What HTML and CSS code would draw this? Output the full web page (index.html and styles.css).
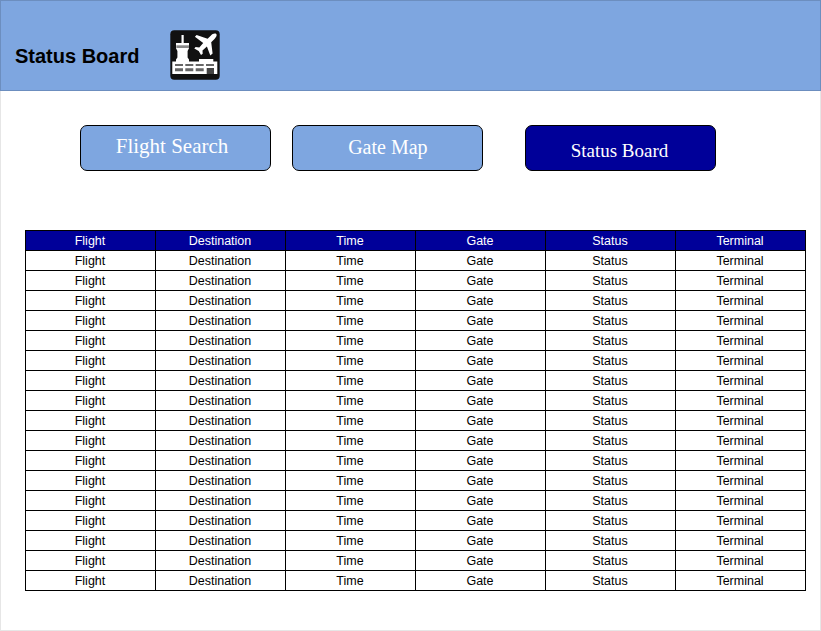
FILE: index.html
```
<!DOCTYPE html>
<html lang="en">
<head>
<meta charset="utf-8">
<title>Status Board</title>
<link rel="stylesheet" href="styles.css">
</head>
<body>
<div class="page">
  <header class="header">
    <h1>Status Board</h1>
    <svg class="logo" viewBox="0 0 50 50" aria-hidden="true">
      <rect x=".3" y=".3" width="49.4" height="49.4" rx="4" fill="#111"/>
      <g fill="#fff">
        <path d="M11.500 5h2.200v8H19v5.200L17.600 21v6.500l1.400 2v2.100h10V29h14.300v2.600h4V44H2.300V31.600H6v-2.100l1.400-2V21L6 18.200V13h5.500z"/>
        <path d="M46.300 4.100C44.800 2.900 42.400 4 40.700 5.700L37.600 8.800 26.600 4.900 24.900 6.800 33.200 12.900 29.300 17.400 25.600 17.100 24.300 18.500 28.700 21 31 25 32.700 23.800 32.500 20.400 36.900 16.400 40.300 25.400 42.600 23.600 41.200 12.300 44.500 9C46.200 7.300 47.300 5.200 46.300 4.100Z"/>
      </g>
      <path d="M6.300 15.300H19V18H6.300z" fill="#888"/>
      <path d="M5 34h8v2H5zM15.300 34h8v2h-8zM25.700 34h8v2h-8zM36 34h8v2h-8zM5 38.300h8v3H5zM15.300 38.300h8v3h-8zM25.700 38.300h8v3h-8z" fill="#666"/>
      <path d="M36.700 38H44v6h-7.300z" fill="#444"/>
    </svg>
  </header>
  <nav class="nav">
    <a class="button search">Flight Search</a>
    <a class="button map">Gate Map</a>
    <a class="button active">Status Board</a>
  </nav>
  <table class="board">
    <thead></thead>
    <tbody></tbody>
  </table>
</div>
<script src="board.js"></script>
</body>
</html>
```
FILE: styles.css
```
* { box-sizing: border-box; }
body {
  margin: 0;
  background: #fff;
  font-family: "Liberation Sans", Arial, sans-serif;
}
.page {
  width: 821px;
  height: 631px;
  border: 1px solid #e6e6e6;
  border-top: 0;
}
.header {
  display: flex;
  align-items: center;
  gap: 30px;
  height: 91px;
  margin: 0 -1px;
  padding: 19px 0 0 14px;
  background: #7ea6e0;
  border: 1px solid #6c8ebf;
}
.header h1 {
  width: 125px;
  margin: 0;
  padding-top: 2px;
  font-size: 20px;
  line-height: 24px;
  white-space: nowrap;
}
.logo { width: 50px; height: 50px; }
.nav {
  display: flex;
  padding: 34px 0 0 79px;
}
.button {
  width: 191px;
  height: 46px;
  border: 1px solid #000;
  border-radius: 7px;
  background: #7ea6e0;
  color: #fff;
  font-family: "Liberation Serif", "Times New Roman", serif;
  text-align: center;
  white-space: nowrap;
}
.search { font-size: 21px; line-height: 41px; padding-right: 7px; }
.map { margin-left: 21.400px; font-size: 20px; line-height: 42px; }
.active {
  margin-left: 41.600px;
  padding-right: 2px;
  background: #009;
  font-size: 19px;
  line-height: 49px;
}
.board {
  width: 781px;
  margin: 59px 0 0 24px;
  border-collapse: collapse;
  table-layout: fixed;
  font-size: 12.500px;
  line-height: 17px;
}
.board th, .board td {
  height: 20px;
  padding: 2px 1px 0 0;
  border: 1px solid #000;
  font-weight: 400;
  text-align: center;
}
.board th { background: #009; color: #fff; }
```
FILE: board.js
```
const columns = ["Flight", "Destination", "Time", "Gate", "Status", "Terminal"];
const row = (tag) => "<tr>" + columns.map((c) => `<${tag}>${c}</${tag}>`).join("") + "</tr>";
document.querySelector(".board thead").innerHTML = row("th");
document.querySelector(".board tbody").innerHTML = row("td").repeat(17);
```
